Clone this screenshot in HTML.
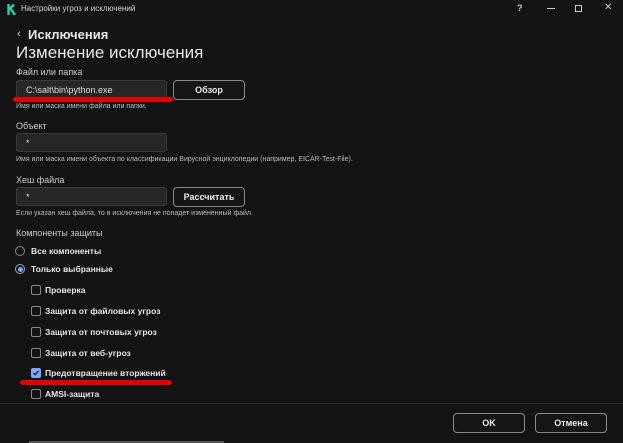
<!DOCTYPE html>
<html><head><meta charset="utf-8"><style>
*{margin:0;padding:0;box-sizing:border-box}
body{width:623px;height:443px;background:#131313;color:#e8e8e8;font-family:"Liberation Sans",sans-serif;position:relative;overflow:hidden}
.a{position:absolute;white-space:nowrap}
.inp{position:absolute;left:16px;width:151px;height:19px;background:#262626;border:1px solid #3a3a3a;border-radius:3px;font-size:9px;padding:4px 0 0 9px;color:#ddd}
.btn{position:absolute;height:20px;border:1px solid #8a8a8a;border-radius:4px;background:#151515;font-size:9px;font-weight:bold;text-align:center;line-height:18px;color:#eee}
.lbl{font-size:9px;color:#cfcfcf}
.hint{font-size:7px;color:#bdbdbd}
.cb{position:absolute;left:31px;width:10px;height:10px;border:1px solid #888;border-radius:2px}
.cl{position:absolute;left:45px;font-size:8.5px;font-weight:bold;color:#e6e6e6}
.red{position:absolute;height:5px;background:#e00000;border-radius:3px}
</style></head><body>
<svg class="a" style="left:7px;top:4px" width="9" height="11" viewBox="0 0 9 11"><path d="M1.5 0V11M1.5 6L7 0.5M3.5 4.5L8 11" stroke="#1fd6a8" stroke-width="2.4" fill="none"/></svg>
<div class="a" style="left:21px;top:4px;font-size:8px;color:#d8d8d8">Настройки угроз и исключений</div>
<div class="a" style="left:517px;top:3px;font-size:9px;font-weight:bold;color:#ccc">?</div>
<div class="a" style="left:547px;top:8px;width:8px;height:1px;background:#ccc"></div>
<div class="a" style="left:575px;top:5px;width:7px;height:7px;border:1px solid #ccc"></div>
<div class="a" style="left:604px;top:2px;font-size:10px;color:#ccc">✕</div>
<div class="a" style="left:17px;top:28px;font-size:11px;color:#ddd">‹</div>
<div class="a" style="left:28px;top:27px;font-size:13px;font-weight:bold">Исключения</div>
<div class="a" style="left:16px;top:43px;font-size:17px">Изменение исключения</div>
<div class="a lbl" style="left:16px;top:67px">Файл или папка</div>
<div class="inp" style="top:80px">C:\salt\bin\python.exe</div>
<div class="btn" style="left:173px;top:80px;width:72px">Обзор</div>
<div class="red" style="left:13px;top:97px;width:160px"></div>
<div class="a hint" style="left:16px;top:103px">Имя или маска имени файла или папки.</div>
<div class="a lbl" style="left:16px;top:121px">Объект</div>
<div class="inp" style="top:133px">*</div>
<div class="a hint" style="left:16px;top:156px">Имя или маска имени объекта по классификации Вирусной энциклопедии (например, EICAR-Test-File).</div>
<div class="a lbl" style="left:16px;top:175px">Хеш файла</div>
<div class="inp" style="top:187px">*</div>
<div class="btn" style="left:173px;top:187px;width:72px">Рассчитать</div>
<div class="a hint" style="left:16px;top:210px">Если указан хеш файла, то в исключения не попадет измененный файл.</div>
<div class="a lbl" style="left:16px;top:228px">Компоненты защиты</div>
<div class="a" style="left:15px;top:246px;width:10px;height:10px;border:1px solid #888;border-radius:50%"></div>
<div class="a" style="left:31px;top:246px;font-size:8.5px;font-weight:bold">Все компоненты</div>
<div class="a" style="left:15px;top:264px;width:10px;height:10px;border:1px solid #9ab;border-radius:50%;background:#131313"><div style="margin:1.5px;width:5px;height:5px;border-radius:50%;background:#7aa7ff"></div></div>
<div class="a" style="left:31px;top:264px;font-size:8.5px;font-weight:bold">Только выбранные</div>
<div class="cb" style="top:285px"></div><div class="cl" style="top:285px">Проверка</div>
<div class="cb" style="top:306px"></div><div class="cl" style="top:306px">Защита от файловых угроз</div>
<div class="cb" style="top:327px"></div><div class="cl" style="top:327px">Защита от почтовых угроз</div>
<div class="cb" style="top:348px"></div><div class="cl" style="top:348px">Защита от веб-угроз</div>
<div class="cb" style="top:368px;background:#7aa7ff;border-color:#7aa7ff"><svg width="8" height="8" style="position:absolute;left:0;top:0"><path d="M1.5 4L3.2 5.8L6.5 2" stroke="#111" stroke-width="1.2" fill="none"/></svg></div>
<div class="cl" style="top:368px">Предотвращение вторжений</div>
<div class="red" style="left:20px;top:380px;width:152px"></div>
<div class="cb" style="top:389px"></div><div class="cl" style="top:389px">AMSI-защита</div>
<div class="a" style="left:0;top:403px;width:623px;height:1px;background:#262626"></div>
<div class="btn" style="left:453px;top:413px;width:72px">OK</div>
<div class="btn" style="left:535px;top:413px;width:72px">Отмена</div>
<div class="a" style="left:29px;top:441px;width:195px;height:2px;background:#555"></div>
</body></html>
